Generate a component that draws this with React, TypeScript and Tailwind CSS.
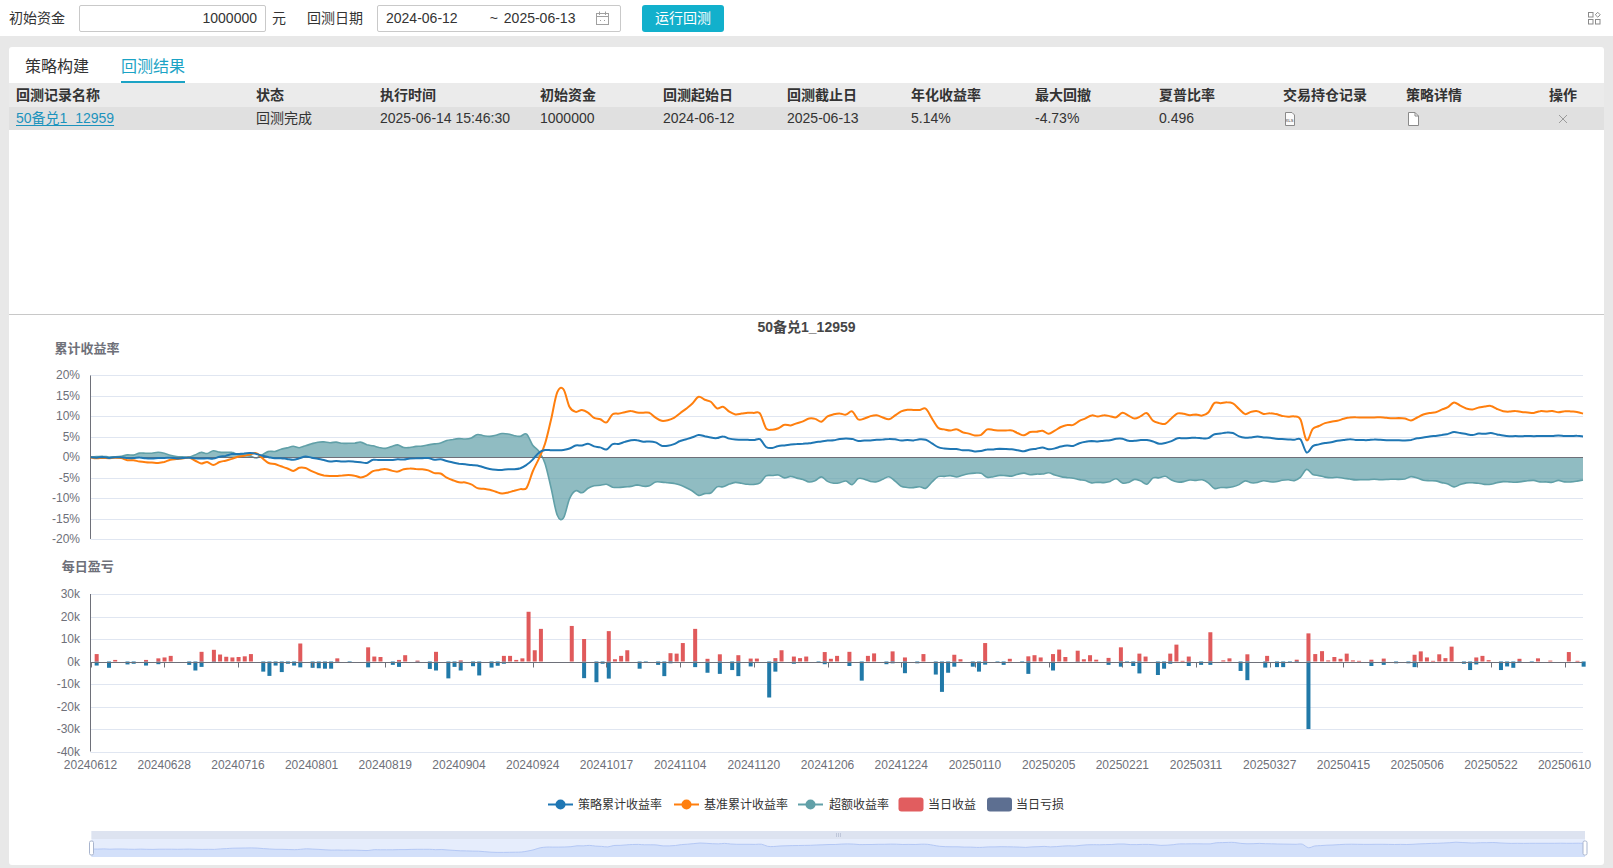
import React from "react";

type P = [number, number];

const BK: P[] = [[90.2,0],[94.9,-0.5],[102.8,0],[118.6,-0.2],[130.5,-0.8],[142.3,-1.0],[158.2,-1.3],[166.1,-1.0],[181.9,-0.2],[189.8,0],[197.7,-1.5],[205.6,-1.2],[213.5,-1.8],[221.4,-1.0],[237.2,0],[253.1,0.8],[255,1.2],[261,0],[268.9,-1.5],[276.8,-1.8],[284.7,-2.5],[296.6,-3.5],[300.5,-2.0],[308.4,-3.0],[324.2,-4.5],[340.1,-4.5],[355.9,-4.6],[363.8,-5.0],[371.7,-3.5],[383.5,-2.8],[395.4,-3.5],[407.3,-2.7],[423.1,-2.8],[435,-4.0],[438.9,-3.5],[446.8,-5.2],[458.7,-6.0],[470.5,-6.5],[478.4,-7.8],[490.3,-7.8],[498.2,-8.8],[506.1,-8.8],[513,-8.2],[521.4,-7.8],[526.8,-7.5],[532.1,-4],[539.3,0],[546.4,4],[553.6,12],[558.9,17.5],[562.5,18.9],[566.1,11],[571.4,13],[576.8,10.5],[580.4,11],[585.7,12.5],[589.3,10],[592.9,9.8],[600,9.5],[605.4,7.8],[608.9,10.5],[621.4,10.8],[630.4,11.5],[635.7,10.8],[650,10.8],[658.9,9],[667.9,9],[676.8,10],[683.9,12],[689.3,11.5],[696.4,15.3],[703.6,14],[710.7,13.5],[716.1,12],[723.2,12.3],[732.1,10.5],[742.9,10.8],[760.7,10.8],[766.1,7],[771.4,6.5],[778.6,7],[783.9,8.2],[789.3,7.5],[800,8.5],[810.7,9.7],[821.4,8.8],[828.6,10.2],[839.3,10.9],[844.6,10.3],[851.8,11.5],[855.4,9.2],[860.7,9],[875,10.3],[889.3,9.2],[903.6,11.8],[917.9,11.6],[925,12.2],[937.5,7.3],[946.4,6.5],[957.1,6.8],[967.9,5.8],[980.4,5.2],[985.7,7],[996.4,6.4],[1014.3,6.6],[1023.2,5.2],[1032.1,6.2],[1042.9,6.4],[1048.2,5.5],[1056.7,6.7],[1065,8.1],[1073.3,7.9],[1078.3,8.9],[1090,10.1],[1100,10],[1108.3,10.3],[1115,9.4],[1120,10.8],[1126.7,10.7],[1133.3,9.2],[1143.3,10.5],[1146.7,10.8],[1151.7,8.8],[1163.3,8.2],[1168.3,8.5],[1175,10.7],[1183.3,10.6],[1190,10.3],[1195,10.7],[1206.7,9.8],[1211.7,13.2],[1220,13.1],[1231.7,13.5],[1236.7,12.5],[1243.3,10.4],[1250,11.2],[1260,11.1],[1266.7,10.4],[1271.7,11.0],[1280,10.1],[1300,9.8],[1301.7,8],[1305,3.4],[1313.3,7],[1323.3,8.2],[1340,9.2],[1348.3,9.9],[1373.3,9.7],[1393.3,9.6],[1403.3,9.5],[1410,8.8],[1423.3,10.6],[1436.7,11.1],[1446.7,12.0],[1453.3,13.6],[1460,12.7],[1470,11.6],[1490,12.7],[1496.7,11.8],[1506.7,11.0],[1520,11.3],[1530,10.8],[1540,11.3],[1560,11.1],[1575,11.0],[1583,10.6]];

const SK: P[] = [[90.2,0],[118.6,-0.1],[158.2,-0.3],[189.8,-0.2],[197.7,-0.5],[213.5,-0.3],[229.3,0.6],[253.1,1.1],[261,0.5],[276.8,-0.3],[296.6,-0.6],[304.5,0.3],[316.3,-0.3],[328.2,-1.0],[355.9,-1.1],[365.8,-1.5],[371.7,-0.7],[395.4,-0.6],[415.2,-0.3],[431,-0.3],[435,-0.8],[438.9,-0.3],[446.8,-1.0],[458.7,-1.5],[474.5,-1.9],[498.2,-3.3],[510,-3.0],[523.2,-2.7],[528.6,-1.5],[535.7,0],[541.1,1.7],[567.9,1.7],[573.2,3.3],[578.6,2.5],[585.7,3.5],[592.9,2.8],[600,2.5],[605.4,1.7],[610.7,3.1],[621.4,3.3],[630.4,4.2],[657.1,3.6],[660.7,2.8],[671.4,2.8],[683.9,4.4],[689.3,4.2],[696.4,5.5],[703.6,5.2],[714.3,4.6],[723.2,5.0],[733.9,4.2],[746.4,4.3],[760.7,4.3],[766.1,2.5],[771.4,2.3],[782.1,2.9],[796.4,3.2],[821.4,3.8],[839.3,4.4],[851.8,4.6],[857.1,4.0],[875,4.3],[892.9,4.4],[903.6,4.1],[925,4.4],[939.3,2.2],[957.1,2.0],[978.6,1.3],[985.7,2.0],[1014.3,2.0],[1023.2,1.5],[1042.9,2.4],[1048.3,1.8],[1056.7,2.4],[1066.7,2.8],[1073.3,2.8],[1080,3.4],[1090,3.9],[1106.7,4.0],[1120,4.6],[1130,3.8],[1143.3,4.4],[1160,3.3],[1166.7,3.5],[1176.7,4.6],[1196.7,4.8],[1206.7,4.3],[1211.7,5.7],[1231.7,6.0],[1243.3,4.7],[1253.3,5.0],[1266.7,4.8],[1280,4.5],[1301.7,4.3],[1305.7,1.0],[1313.3,2.9],[1326.7,3.6],[1346.7,4.3],[1373.3,4.2],[1406.7,4.0],[1423.3,4.8],[1446.7,5.5],[1453.3,6.2],[1473.3,5.5],[1490,6.0],[1506.7,5.2],[1560,5.3],[1583,5.1]];

const BARS: P[] = [[1,-1.8],[1,3.3],[3,-2.8],[4,0.7],[6,-1.3],[7,-1.0],[9,-1.8],[9,0.7],[11,-1.2],[11,1.4],[12,1.8],[13,2.5],[16,-1.5],[17,-4.0],[18,-2.4],[18,4.3],[20,-0.6],[20,5.2],[21,3.1],[22,2.1],[23,1.8],[24,2.0],[25,2.3],[26,3.3],[28,-4.5],[29,-6.4],[30,-1.8],[31,-4.7],[32,-1.0],[33,-1.8],[34,-2.6],[34,8.0],[36,-2.8],[37,-3.0],[38,-3.2],[39,-3.2],[40,-0.4],[40,1.4],[42,-0.5],[45,-2.6],[45,6.3],[46,2.2],[47,2.0],[49,-1.5],[50,-2.4],[50,0.7],[51,2.8],[53,-0.6],[53,0.4],[55,-3.3],[56,-4.0],[56,4.3],[58,-7.5],[59,-2.4],[60,-4.0],[60,0.5],[62,-2.1],[63,-6.2],[65,-2.7],[66,-1.9],[67,-1.0],[67,2.5],[68,2.5],[69,0.7],[70,1.4],[71,22.1],[72,5.0],[73,14.5],[78,15.8],[80,-7.4],[80,10.0],[82,-9.2],[83,-1.0],[84,-7.6],[84,13.5],[85,1.0],[86,2.5],[87,5.0],[89,-3.2],[90,-0.5],[92,-1.5],[93,-6.5],[94,3.7],[94,-0.8],[95,3.5],[96,8.2],[98,14.5],[98,-2.5],[100,-5.0],[100,1.2],[102,3.2],[102,-5.5],[104,-3.8],[105,2.8],[105,-6.5],[107,-2.2],[107,1.3],[108,1.3],[110,-16.0],[111,1.5],[111,-4.5],[112,5.0],[114,-1.0],[114,2.2],[115,1.5],[116,2.2],[118,-0.3],[119,4.2],[119,-1.2],[120,1.2],[121,2.5],[123,-2.0],[123,4.3],[125,-8.5],[126,2.5],[127,3.6],[129,-1.2],[130,4.5],[130,-0.8],[132,1.8],[132,-5.2],[134,-0.8],[135,3.3],[137,-5.8],[138,-13.5],[139,-5.0],[140,-2.3],[140,3.0],[141,1.0],[143,-2.3],[144,-4.5],[145,8.2],[145,-1.4],[147,-0.4],[148,-1.5],[149,1.2],[151,-0.4],[152,2.3],[152,-5.5],[153,2.8],[154,1.8],[156,-4.0],[156,3.3],[157,5.3],[158,2.0],[160,-0.6],[160,4.8],[161,1.0],[162,2.8],[163,0.8],[165,-1.5],[165,1.6],[167,6.3],[167,-2.3],[168,-0.2],[169,-2.0],[170,3.5],[170,-5.3],[171,2.2],[173,-6.0],[174,-3.2],[175,3.5],[175,-1.0],[176,7.5],[177,0.3],[178,-2.0],[178,2.2],[180,-1.5],[181.5,13.0],[181.5,-1.5],[183.6,0.5],[184.6,1.4],[186.4,-4.2],[187.5,3.2],[187.5,-8.3],[190.4,-2.7],[190.7,2.5],[192.3,-2.5],[193.3,-2.5],[194.4,-0.4],[195.5,0.8],[195.5,-0.6],[197.4,12.5],[197.4,-30.0],[198.5,3.3],[199.6,4.6],[200.6,0.5],[201.6,2.0],[202.6,1.2],[203.6,3.5],[204.6,0.5],[205.6,0.3],[207.6,-2.0],[207.6,0.8],[209.6,-1.5],[209.6,1.3],[211.6,-0.8],[213.6,-0.8],[214.6,3.0],[214.6,-2.5],[215.6,4.5],[216.6,1.8],[217.6,0.3],[218.6,3.2],[219.6,1.5],[220.6,6.6],[222.6,-1.0],[223.6,-3.8],[224.6,1.8],[224.6,-1.3],[225.6,2.5],[226.6,0.6],[228.6,-3.8],[229.6,-2.2],[230.6,-2.8],[231.6,1.2],[231.6,-0.5],[233.6,-0.4],[234.6,1.4],[236.6,0.4],[239.6,4.2],[241,0.3],[242,-2.3]];

const N = 244;
const X = (i: number) => 90.5 + 6.142 * i;
const Y1 = (v: number) => 457.2 - 4.0875 * v;
const Y2 = (v: number) => 661.5 - 2.25 * v;

function interp(K: P[], x: number) {
  if (x <= K[0][0]) return K[0][1];
  for (let k = 1; k < K.length; k++) {
    if (x <= K[k][0]) {
      const [x0, y0] = K[k - 1];
      const [x1, y1] = K[k];
      return y0 + ((y1 - y0) * (x - x0)) / (x1 - x0);
    }
  }
  return K[K.length - 1][1];
}

let seed = 12345;
const rnd = () => {
  seed = (seed * 16807) % 2147483647;
  return (seed / 2147483647) * 2 - 1;
};

const S: number[] = [];
const B: number[] = [];
for (let i = 0; i < N; i++) {
  const x = X(i);
  const ns = i === 0 ? 0 : rnd() * 0.12;
  const nb = i === 0 ? 0 : rnd() * 0.18;
  S.push(interp(SK, x) + ns);
  B.push(interp(BK, x) + nb);
}
const E = S.map((s, i) => s - B[i]);

function smooth(pts: P[]) {
  let d = `M${pts[0][0].toFixed(1)},${pts[0][1].toFixed(1)}`;
  for (let i = 0; i < pts.length - 1; i++) {
    const p0 = pts[i - 1] || pts[i];
    const p1 = pts[i];
    const p2 = pts[i + 1];
    const p3 = pts[i + 2] || p2;
    const c1x = p1[0] + (p2[0] - p0[0]) / 6;
    const c1y = p1[1] + (p2[1] - p0[1]) / 6;
    const c2x = p2[0] - (p3[0] - p1[0]) / 6;
    const c2y = p2[1] - (p3[1] - p1[1]) / 6;
    d += `C${c1x.toFixed(1)},${c1y.toFixed(1)} ${c2x.toFixed(1)},${c2y.toFixed(1)} ${p2[0].toFixed(1)},${p2[1].toFixed(1)}`;
  }
  return d;
}

const sPath = smooth(S.map((v, i) => [X(i), Y1(v)] as P));
const bPath = smooth(B.map((v, i) => [X(i), Y1(v)] as P));
const ePts = E.map((v, i) => [X(i), Y1(v)] as P);
const eLine = smooth(ePts);
const eArea = `${eLine}L${X(N - 1)},${Y1(0)}L${X(0)},${Y1(0)}Z`;

const SL0 = 91.5;
const SL1 = 1585;
const slPts = S.map((v, i) => [SL0 + ((SL1 - SL0) * i) / (N - 1), 849 - 1.1 * v] as P);
const slLine = smooth(slPts);
const slArea = `${slLine}L${SL1},857L${SL0},857Z`;

const XLABELS = ["20240612","20240628","20240716","20240801","20240819","20240904","20240924","20241017","20241104","20241120","20241206","20241224","20250110","20250205","20250221","20250311","20250327","20250415","20250506","20250522","20250610"];

const crisp = (y: number) => Math.round(y) + 0.5;

function Chart() {
  const g1 = [20, 15, 10, 5, -5, -10, -15, -20];
  const g2 = [30, 20, 10, -10, -20, -30, -40];
  return (
    <svg width={1594} height={550} viewBox="9 315 1594 550" className="block">
      <text x={806.5} y={332} textAnchor="middle" fontSize={14} fontWeight="bold" fill="#464646">50备兑1_12959</text>
      <text x={54.5} y={352.5} fontSize={13} fontWeight="bold" fill="#6e7079">累计收益率</text>
      {g1.map((v) => (
        <line key={v} x1={90.5} x2={1583} y1={crisp(Y1(v))} y2={crisp(Y1(v))} stroke="#e0e6f1" strokeWidth={1} />
      ))}
      {[20, 15, 10, 5, 0, -5, -10, -15, -20].map((v) => (
        <text key={v} x={80} y={Y1(v) + 4} textAnchor="end" fontSize={12} fill="#6e7079">{v}%</text>
      ))}
      <path d={eArea} fill="#61a0a8" fillOpacity={0.7} />
      <path d={eLine} fill="none" stroke="#61a0a8" strokeWidth={1.6} />
      <line x1={90.5} x2={1583} y1={crisp(Y1(0))} y2={crisp(Y1(0))} stroke="#6e7079" strokeWidth={1} />
      <line x1={90.5} x2={90.5} y1={Y1(20)} y2={Y1(-20)} stroke="#6e7079" strokeWidth={1} />
      <path d={bPath} fill="none" stroke="#ff7f0e" strokeWidth={2} strokeLinejoin="round" />
      <path d={sPath} fill="none" stroke="#1f77b4" strokeWidth={2} strokeLinejoin="round" />

      <text x={61.7} y={570.5} fontSize={13} fontWeight="bold" fill="#6e7079">每日盈亏</text>
      {g2.map((v) => (
        <line key={v} x1={90.5} x2={1583} y1={crisp(Y2(v))} y2={crisp(Y2(v))} stroke="#e0e6f1" strokeWidth={1} />
      ))}
      {[30, 20, 10, 0, -10, -20, -30, -40].map((v) => (
        <text key={v} x={80} y={Y2(v) + 4} textAnchor="end" fontSize={12} fill="#6e7079">{v}k</text>
      ))}
      {BARS.map(([i, v], k) => {
        const x = 90.5 + 6.17 * i;
        const y0 = Y2(0);
        const y = Y2(v);
        return (
          <rect
            key={k}
            x={x - 2}
            y={Math.min(y, y0)}
            width={4}
            height={Math.max(0.8, Math.abs(y - y0))}
            fill={v > 0 ? "#e05a5b" : "#2179a8"}
          />
        );
      })}
      <line x1={90.5} x2={1583} y1={crisp(Y2(0))} y2={crisp(Y2(0))} stroke="#6e7079" strokeWidth={1} />
      <line x1={90.5} x2={90.5} y1={Y2(30)} y2={Y2(-40)} stroke="#6e7079" strokeWidth={1} />
      {XLABELS.map((l, k) => (
        <line key={"t" + l} x1={Math.round(X(12 * k)) + 0.5} x2={Math.round(X(12 * k)) + 0.5} y1={crisp(Y2(0))} y2={crisp(Y2(0)) + 5} stroke="#6e7079" strokeWidth={1} />
      ))}
      {XLABELS.map((l, k) => (
        <text key={l} x={X(12 * k)} y={768.5} textAnchor="middle" fontSize={12} fill="#6e7079">{l}</text>
      ))}

      {/* legend */}
      <g fontSize={12} fill="#333">
        <line x1={548} x2={573} y1={804.5} y2={804.5} stroke="#1f77b4" strokeWidth={2} />
        <circle cx={560.5} cy={804.5} r={5} fill="#1f77b4" />
        <text x={578} y={808.8}>策略累计收益率</text>
        <line x1={674} x2={699} y1={804.5} y2={804.5} stroke="#ff7f0e" strokeWidth={2} />
        <circle cx={686.5} cy={804.5} r={5} fill="#ff7f0e" />
        <text x={704} y={808.8}>基准累计收益率</text>
        <line x1={798} x2={823} y1={804.5} y2={804.5} stroke="#61a0a8" strokeWidth={2} />
        <circle cx={810.5} cy={804.5} r={5} fill="#61a0a8" />
        <text x={829} y={808.8}>超额收益率</text>
        <rect x={898.5} y={797.5} width={25} height={14} rx={3} fill="#e15d5f" />
        <text x={928} y={808.8}>当日收益</text>
        <rect x={987} y={797.5} width={25} height={14} rx={3} fill="#5d6f91" />
        <text x={1016} y={808.8}>当日亏损</text>
      </g>

      {/* data zoom slider */}
      <rect x={SL0} y={831} width={SL1 - SL0} height={26} fill="#e6edfc" />
      <path d={slArea} fill="#d3e0fa" />
      <path d={slLine} fill="none" stroke="#b4c8f5" strokeWidth={1} />
      <rect x={SL0} y={831} width={SL1 - SL0} height={8} fill="#dde3f0" />
      <g stroke="#b6bfd3" strokeWidth={0.8}>
        <line x1={836.5} x2={836.5} y1={833} y2={837} />
        <line x1={838.5} x2={838.5} y1={833} y2={837} />
        <line x1={840.5} x2={840.5} y1={833} y2={837} />
      </g>
      <rect x={SL0 - 2} y={841} width={4} height={14} rx={1.5} fill="#fff" stroke="#a9b5ce" strokeWidth={1} />
      <rect x={SL1 - 2} y={841} width={4} height={14} rx={1.5} fill="#fff" stroke="#a9b5ce" strokeWidth={1} />
    </svg>
  );
}

function CalendarIcon() {
  return (
    <svg width="15" height="15" viewBox="0 0 15 15" fill="none" stroke="#a0a0a0" strokeWidth="1">
      <rect x="1.5" y="2.5" width="12" height="11" />
      <line x1="4.5" y1="0.5" x2="4.5" y2="4" />
      <line x1="10.5" y1="0.5" x2="10.5" y2="4" />
      <line x1="1.5" y1="5.5" x2="13.5" y2="5.5" />
      <line x1="5" y1="9.5" x2="6" y2="9.5" />
      <line x1="9" y1="9.5" x2="10" y2="9.5" />
    </svg>
  );
}

function GridIcon() {
  return (
    <svg width="13" height="13" viewBox="0 0 13 13" fill="none" stroke="#8a8a8a" strokeWidth="1">
      <rect x="0.5" y="0.5" width="4.5" height="4.5" />
      <path d="M9.75 0.3 L12.2 2.75 L9.75 5.2 L7.3 2.75 Z" />
      <rect x="0.5" y="7.5" width="4.5" height="4.5" />
      <rect x="7.5" y="7.5" width="4.5" height="4.5" />
    </svg>
  );
}

function XlsIcon() {
  return (
    <svg width="12" height="14" viewBox="0 0 12 14" fill="none">
      <path d="M1.5 0.5 H8 L10.5 3 V13.5 H1.5 Z" stroke="#8a8a8a" strokeWidth="1" fill="#fafafa" />
      <text x="1.6" y="9.6" fontSize="4" fontWeight="bold" fill="#7a7a7a" fontFamily="Liberation Sans, sans-serif">XLS</text>
    </svg>
  );
}

function DocIcon() {
  return (
    <svg width="11" height="14" viewBox="0 0 11 14" fill="none">
      <path d="M0.5 0.5 H7 L10.5 4 V13.5 H0.5 Z" stroke="#8a8a8a" strokeWidth="1" fill="#fff" />
      <path d="M7 0.5 V4 H10.5" stroke="#8a8a8a" strokeWidth="1" />
    </svg>
  );
}

function CloseIcon() {
  return (
    <svg width="10" height="10" viewBox="0 0 10 10" stroke="#9a9a9a" strokeWidth="1">
      <line x1="1" y1="1" x2="9" y2="9" />
      <line x1="9" y1="1" x2="1" y2="9" />
    </svg>
  );
}

const HEAD = ["回测记录名称","状态","执行时间","初始资金","回测起始日","回测截止日","年化收益率","最大回撤","夏普比率","交易持仓记录","策略详情","操作"];
const COLS = "grid grid-cols-[240px_124px_160px_123px_124px_124px_124px_124px_124px_123px_143px_1fr]";

export default function App() {
  return (
    <div className="min-h-screen bg-[#e8e8e8] font-['Liberation_Sans','Noto_Sans_CJK_SC',sans-serif] text-[#333] text-[14px]">
      {/* top bar */}
      <div className="h-[36px] bg-white flex items-center">
        <span className="ml-[9px] leading-none">初始资金</span>
        <div className="ml-[14px] w-[187px] h-[27px] border border-[#c9c9c9] rounded-[2px] flex items-center justify-end pr-[8px]">1000000</div>
        <span className="ml-[6px]">元</span>
        <span className="ml-[21px]">回测日期</span>
        <div className="ml-[14px] w-[244px] h-[27px] border border-[#c9c9c9] rounded-[2px] flex items-center pl-[8px]">
          <span>2024-06-12</span>
          <span className="ml-[32px]">~</span>
          <span className="ml-[6px]">2025-06-13</span>
          <span className="ml-[20px] flex"><CalendarIcon /></span>
        </div>
        <button className="ml-[21px] w-[82px] h-[27px] bg-[#12b0cc] text-white rounded-[3px] flex items-center justify-center">运行回测</button>
        <span className="ml-auto mr-[12px] flex"><GridIcon /></span>
      </div>

      {/* card */}
      <div className="mx-[9px] mt-[11px] bg-white rounded-[3px] overflow-hidden">
        <div className="h-[36px] flex pl-[16px] gap-[32px]">
          <div className="pt-[8px] leading-[24px] text-[16px] text-[#333] h-[36px]">策略构建</div>
          <div className="pt-[8px] leading-[24px] text-[16px] text-[#1ba3c5] h-[36px] border-b-2 border-[#1ba3c5]">回测结果</div>
        </div>
        <div className={`${COLS} h-[24px] items-center bg-[#ebebeb] pl-[7px] font-bold`}>
          {HEAD.map((h) => (
            <div key={h}>{h}</div>
          ))}
        </div>
        <div className={`${COLS} h-[23px] items-center bg-[#e0e0e0] pl-[7px]`}>
          <div className="text-[#1c93bd] underline underline-offset-2">50备兑1_12959</div>
          <div>回测完成</div>
          <div>2025-06-14 15:46:30</div>
          <div>1000000</div>
          <div>2024-06-12</div>
          <div>2025-06-13</div>
          <div>5.14%</div>
          <div>-4.73%</div>
          <div>0.496</div>
          <div className="flex pl-[1px]"><XlsIcon /></div>
          <div className="flex pl-[2px]"><DocIcon /></div>
          <div className="flex pl-[9px]"><CloseIcon /></div>
        </div>
        <div className="h-[184px]" />
        <div className="border-t border-[#c8c8c8]">
          <Chart />
        </div>
      </div>
    </div>
  );
}
